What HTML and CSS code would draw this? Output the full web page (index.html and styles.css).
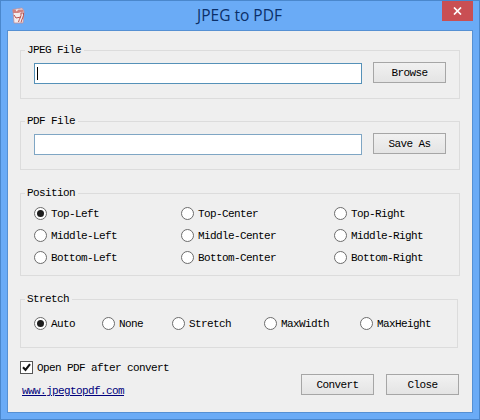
FILE: index.html
```html
<!DOCTYPE html>
<html lang="en">
<head>
<meta charset="utf-8">
<title>JPEG to PDF</title>
<link rel="stylesheet" href="styles.css">
</head>
<body>
<div class="window">
  <header class="titlebar">
    <svg class="app-icon" width="13" height="17" viewBox="0 0 13 17">
      <path d="M1 2.500 10 1l2 3-1 12H2z" fill="#f4ecee" stroke="#c08f9a" stroke-width=".8"/>
      <path d="M.5 2.500h3l1 2 2-2h4l1.500 2-6 1.500H1z" fill="#d0817f"/>
      <path d="M6.500 15c1-4 3-5 2.500-9h2.500c.5 4-2 6-2.500 9.500M2 8l2 3 5-1" fill="none" stroke="#b9504d" stroke-width="1"/>
    </svg>
    <h1 class="title">JPEG to PDF</h1>
    <button class="close" aria-label="Close window">
      <svg width="9" height="8" viewBox="0 0 9 8"><path d="M1 .5 8 7.500M8 .5 1 7.500" stroke="#fff" stroke-width="1.700"/></svg>
    </button>
  </header>
  <main class="client">
    <section class="group file">
      <h2 class="legend">JPEG File</h2>
      <div class="field focused"><span class="caret"></span></div>
      <button class="btn">Browse</button>
    </section>
    <section class="group file second">
      <h2 class="legend">PDF File</h2>
      <div class="field"></div>
      <button class="btn">Save As</button>
    </section>
    <section class="group position">
      <h2 class="legend">Position</h2>
      <label class="option"><span class="radio on"></span>Top-Left</label>
      <label class="option"><span class="radio"></span>Top-Center</label>
      <label class="option"><span class="radio"></span>Top-Right</label>
      <label class="option"><span class="radio"></span>Middle-Left</label>
      <label class="option"><span class="radio"></span>Middle-Center</label>
      <label class="option"><span class="radio"></span>Middle-Right</label>
      <label class="option"><span class="radio"></span>Bottom-Left</label>
      <label class="option"><span class="radio"></span>Bottom-Center</label>
      <label class="option"><span class="radio"></span>Bottom-Right</label>
    </section>
    <section class="group stretch">
      <h2 class="legend">Stretch</h2>
      <label class="option"><span class="radio on"></span>Auto</label>
      <label class="option"><span class="radio"></span>None</label>
      <label class="option"><span class="radio"></span>Stretch</label>
      <label class="option"><span class="radio"></span>MaxWidth</label>
      <label class="option"><span class="radio"></span>MaxHeight</label>
    </section>
    <footer class="footer">
      <div class="footer-left">
        <label class="check"><span class="box"><svg width="11" height="11" viewBox="0 0 11 11"><path d="M2 5.300 4.500 8 9 2.200" fill="none" stroke="#111" stroke-width="2.100"/></svg></span>Open PDF after convert</label>
        <a class="link" href="#">www.jpegtopdf.com</a>
      </div>
      <div class="actions">
        <button class="btn">Convert</button>
        <button class="btn">Close</button>
      </div>
    </footer>
  </main>
</div>
</body>
</html>
```
FILE: styles.css
```css
* { box-sizing: border-box; }
body { margin: 0; }
.window {
  width: 480px;
  height: 420px;
  padding: 0 7px 7px 6px;
  border: 1px solid #4a87cc;
  background: #6aabf6;
  font: 11px/14px "Liberation Mono", monospace;
  letter-spacing: -0.6px;
  color: #000;
}
.titlebar {
  display: grid;
  grid-template-columns: 36px 1fr 36px;
  height: 29px;
}
.app-icon { margin: 6px 0 0 5px; }
.title {
  margin: 4px 0 0;
  font: 15.5px/20px "Open Sans", "Noto Sans", sans-serif;
  letter-spacing: 0;
  text-align: center;
  color: #0b2f68;
}
.close {
  display: flex;
  align-items: center;
  justify-content: center;
  justify-self: end;
  width: 31px;
  height: 20px;
  margin-right: -1px;
  padding: 0;
  border: 0;
  background: #c94f53;
}
.client {
  width: 466px;
  height: 383px;
  padding: 19px 12px 0;
  border: 1px solid #5590d3;
  background: #efefef;
}
.group {
  position: relative;
  width: 440px;
  border: 1px solid #dcdcdc;
}
.legend {
  position: absolute;
  top: -8px;
  left: 4px;
  margin: 0;
  padding: 0 3px 0 2px;
  background: #efefef;
  font: inherit;
}
.file {
  display: flex;
  gap: 11px;
  height: 49px;
  padding: 11px 0 0 13px;
}
.second { margin-top: 22px; }
.field {
  width: 328px;
  height: 21px;
  margin-top: 1px;
  padding: 3px 2px;
  border: 1px solid #7fa6c4;
  background: #fff;
}
.focused { border-color: #5591b8; }
.caret {
  display: block;
  width: 1px;
  height: 13px;
  background: #000;
}
.btn {
  width: 73px;
  height: 21px;
  padding: 0;
  border: 1px solid #a6a6a6;
  background: linear-gradient(#f1f1f1, #e4e4e4);
  font: inherit;
  letter-spacing: inherit;
  color: inherit;
}
.position {
  display: grid;
  grid-template-columns: 147px 153px 1fr;
  grid-auto-rows: 22px;
  height: 83px;
  margin-top: 23px;
  padding: 9px 0 0 13px;
}
.stretch {
  display: grid;
  grid-template-columns: 68px 70px 92px 96px 1fr;
  grid-auto-rows: 22px;
  width: 438px;
  height: 49px;
  margin-top: 23px;
  padding: 13px 0 0 13px;
}
.option {
  display: flex;
  align-items: center;
  gap: 4px;
  white-space: nowrap;
}
.radio {
  display: flex;
  align-items: center;
  justify-content: center;
  width: 13px;
  height: 13px;
  margin-bottom: 1px;
  border: 1px solid #6c6c6c;
  border-radius: 50%;
  background: #fff;
}
.on::after {
  content: "";
  width: 7px;
  height: 7px;
  border-radius: 50%;
  background: #1d1d1d;
}
.footer {
  display: flex;
  justify-content: space-between;
  width: 439px;
  margin-top: 13px;
}
.check {
  display: flex;
  align-items: center;
  gap: 4px;
  height: 13px;
}
.box {
  width: 13px;
  height: 13px;
  border: 1px solid #555;
  background: #fff;
}
.box svg { display: block; }
.link {
  display: block;
  margin: 10px 0 0 2px;
  color: #00007c;
}
.actions {
  display: flex;
  gap: 12px;
  margin-top: 13px;
}
```
